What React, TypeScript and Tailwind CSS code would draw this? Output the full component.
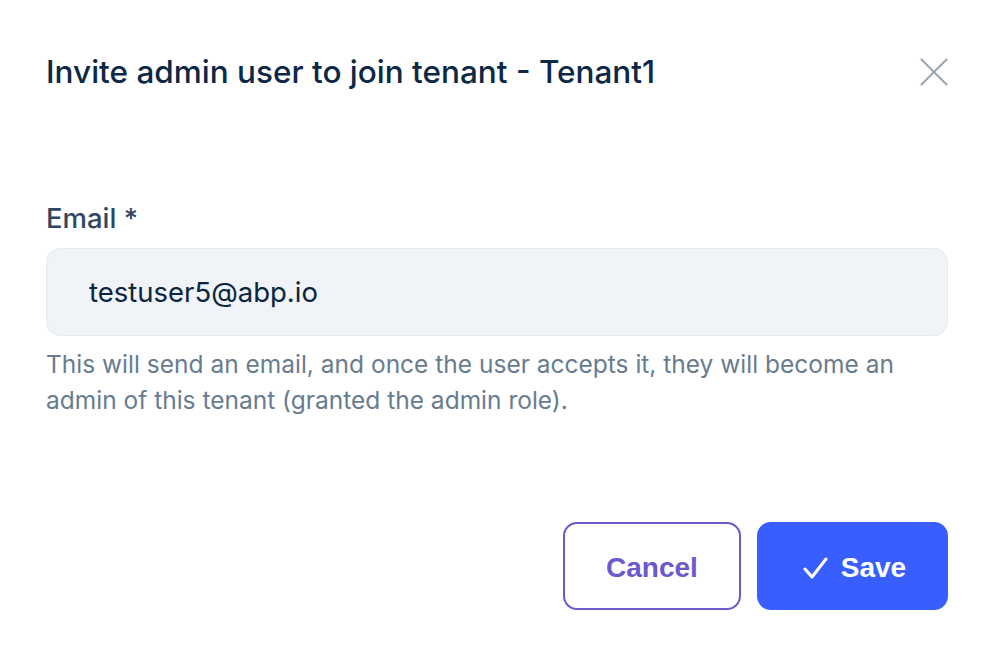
export default function App() {
  return (
    <div className="w-[993px] h-[658px] bg-white font-['Inter',sans-serif] flex flex-col pl-[46px] pr-[45px]">
      {/* Header */}
      <div className="flex items-center justify-between pt-[54px]">
        <h2 className="text-[31.5px] leading-[36px] font-medium text-[#0c2846]">
          Invite admin user to join tenant - Tenant1
        </h2>
        <button type="button" className="w-[28px] h-[28px] flex items-center justify-center text-[#9aa7b4]" title="Close">
          <svg width="28" height="28" viewBox="0 0 28 28" fill="none" stroke="currentColor" strokeWidth="2.2" strokeLinecap="round">
            <path d="M1.5 1.5 L26.5 26.5" />
            <path d="M26.5 1.5 L1.5 26.5" />
          </svg>
        </button>
      </div>

      {/* Body */}
      <div className="flex flex-col pt-[112px]">
        <label className="text-[27.5px] leading-[32px] font-medium text-[#31475f]">Email *</label>
        <input
          type="email"
          defaultValue="testuser5@abp.io"
          className="mt-[14px] h-[88px] w-full rounded-[14px] bg-[#f0f3f7] border border-[#e6eaf0] pl-[42px] text-[27.5px] text-[#0b2540] outline-none"
        />
        <p className="mt-[10px] text-[24.5px] leading-[36px] text-[#687c90]">
          This will send an email, and once the user accepts it, they will become an admin of this tenant (granted the admin role).
        </p>
      </div>

      {/* Footer */}
      <div className="flex justify-end gap-[16px] pt-[104px]">
        <button
          type="button"
          className="w-[178px] h-[88px] rounded-[14px] border-2 border-[#6a5acd] bg-white text-[#6a5acd] font-['Liberation_Sans',sans-serif] font-bold text-[28px] pt-[3px]"
        >
          Cancel
        </button>
        <button
          type="button"
          className="w-[191px] h-[88px] rounded-[14px] bg-[#385eff] text-white font-['Liberation_Sans',sans-serif] font-bold text-[28px] flex items-center justify-center gap-[13px] pl-[4px] pt-[3px]"
        >
          <svg width="25" height="22" viewBox="0 0 25 22" fill="none" stroke="currentColor" strokeWidth="3" strokeLinecap="round" strokeLinejoin="round">
            <path d="M2 12 L9 20 L23 2" />
          </svg>
          Save
        </button>
      </div>
    </div>
  );
}
